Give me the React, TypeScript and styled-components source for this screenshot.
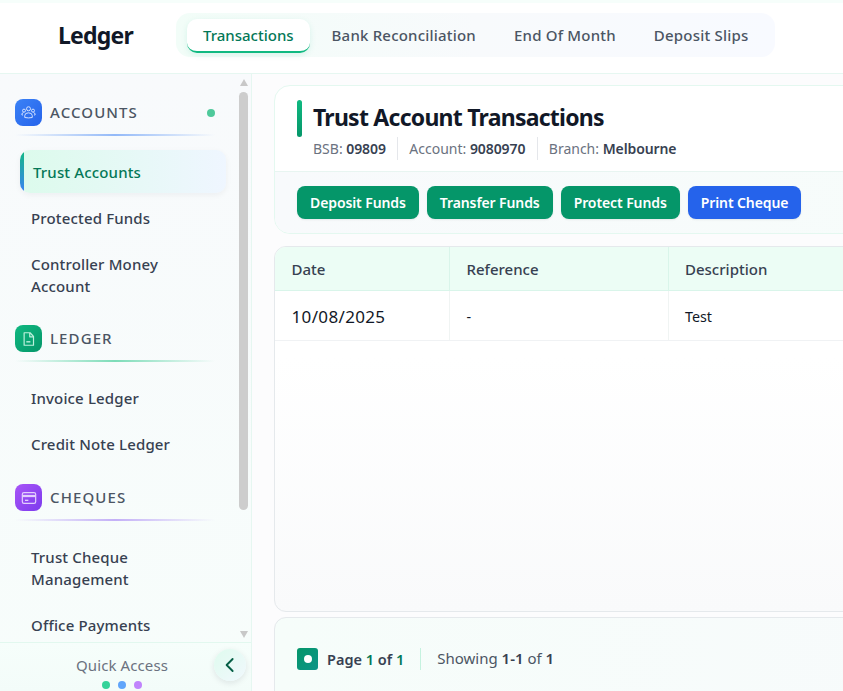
import React from "react";
import styled, { createGlobalStyle } from "styled-components";

const GlobalStyle = createGlobalStyle`
  html, body {
    margin: 0;
    height: 100%;
    overflow: hidden;
    background: #ffffff;
  }
  * { box-sizing: border-box; }
  body { font-family: "Noto Sans", "Open Sans", sans-serif; color: #111827; }
`;

const Shell = styled.div`
  width: 843px;
  height: 691px;
  display: flex;
  flex-direction: column;
  overflow: hidden;
  border-top: 3px solid;
  border-image: linear-gradient(180deg, #f6fefb 66%, #d9fbeb 66%) 1;
`;

const Header = styled.header`
  height: 71px;
  flex: none;
  display: flex;
  align-items: center;
  background: #ffffff;
  border-bottom: 1px solid #e6f7f1;
  padding-bottom: 6px;
`;

const Brand = styled.div`
  width: 176px;
  flex: none;
  padding-left: 58px;
  font-size: 23px;
  font-weight: 700;
  letter-spacing: -0.8px;
  color: #111827;
`;

const Tabs = styled.nav`
  display: flex;
  gap: 6px;
  padding: 6px 11px;
  height: 44px;
  border-radius: 14px;
  background: linear-gradient(90deg, #f2fdf8 0%, #f8fafc 50%, #f8faff 100%);
`;

const Tab = styled.div<{ $active?: boolean }>`
  display: flex;
  align-items: center;
  padding: 0 16px;
  height: ${(p) => (p.$active ? "34px" : "32px")};
  border-radius: 10px;
  font-size: 15px;
  font-weight: 500;
  letter-spacing: ${(p) => (p.$active ? "0" : "0.2px")};
  color: ${(p) => (p.$active ? "#047857" : "#4b5563")};
  background: ${(p) => (p.$active ? "#ffffff" : "transparent")};
  border-bottom: ${(p) => (p.$active ? "2px solid #10b981" : "none")};
  box-shadow: ${(p) => (p.$active ? "0 2px 6px rgba(16, 185, 129, 0.12)" : "none")};
`;

const Body = styled.div`
  flex: 1;
  min-height: 0;
  display: flex;
`;

const Sidebar = styled.aside`
  position: relative;
  width: 252px;
  flex: none;
  display: flex;
  flex-direction: column;
  background: linear-gradient(180deg, #f8fafc 0%, #f7fdfb 100%);
  border-right: 1px solid #e6f7f1;
`;

const SidebarScroll = styled.div`
  flex: 1;
  min-height: 0;
  display: flex;
  padding-right: 3px;
`;

const NavList = styled.div`
  flex: 1;
  min-width: 0;
  overflow: hidden;
  padding: 25px 13px 0 15px;
`;

const Rail = styled.div`
  width: 9px;
  flex: none;
  display: flex;
  flex-direction: column;
  align-items: center;
  padding-top: 5px;
`;

const RailArrow = styled.div<{ $down?: boolean }>`
  width: 0;
  height: 0;
  flex: none;
  border-left: 4.5px solid transparent;
  border-right: 4.5px solid transparent;
  ${(p) =>
    p.$down ? "border-top: 7px solid #c8c8c8;" : "border-bottom: 7px solid #c8c8c8;"}
`;

const RailTrack = styled.div`
  flex: 1;
  width: 100%;
  padding: 6px 0 121px;
  display: flex;
`;

const RailThumb = styled.div`
  width: 100%;
  border-radius: 5px;
  background: #cdcdcd;
`;

const RailEnd = styled.div`
  height: 4px;
  flex: none;
`;

const Section = styled.section<{ $gap?: number }>`
  margin-bottom: ${(p) => p.$gap ?? 18}px;
`;

const SectionHead = styled.div<{ $line: string }>`
  position: relative;
  display: flex;
  align-items: center;
  gap: 8px;
  height: 27px;
  margin-right: 11px;
  margin-bottom: 24px;

  &::after {
    content: "";
    position: absolute;
    left: 0;
    right: 0;
    bottom: -10px;
    height: 2px;
    background: linear-gradient(90deg, transparent, ${(p) => p.$line}, transparent);
  }
`;

const SectionIcon = styled.span<{ $from: string; $to: string }>`
  width: 27px;
  height: 27px;
  flex: none;
  display: flex;
  align-items: center;
  justify-content: center;
  border-radius: 8px;
  background: linear-gradient(135deg, ${(p) => p.$from}, ${(p) => p.$to});
`;

const SectionTitle = styled.span`
  flex: 1;
  font-size: 15px;
  font-weight: 500;
  letter-spacing: 1.1px;
  color: #4b5563;
  padding-bottom: 1px;
`;

const StatusDot = styled.span`
  width: 8px;
  height: 8px;
  border-radius: 50%;
  background: #4fc99b;
`;

const Items = styled.div`
  display: flex;
  flex-direction: column;
  gap: 3px;
`;

const Item = styled.div<{ $active?: boolean }>`
  padding: 10.5px 16px;
  font-size: 15px;
  line-height: 22px;
  font-weight: 500;
  letter-spacing: 0.15px;
  color: #374151;
  border-radius: 10px;

  ${(p) =>
    p.$active &&
    `
    margin-left: 5px;
    padding-left: 13px;
    color: #047857;
    background:
      linear-gradient(180deg, #10b981, #3b82f6) left / 4px 100% no-repeat,
      linear-gradient(90deg, #dcfbec 0%, #eff6ff 100%);
    box-shadow: 0 2px 6px rgba(15, 23, 42, 0.05);
  `}
`;

const QuickAccess = styled.div`
  height: 49px;
  flex: none;
  display: flex;
  flex-direction: column;
  align-items: center;
  padding-top: 12px;
  gap: 6px;
  border-top: 1px solid #e2f8ef;
  background: linear-gradient(180deg, #f6fefb, #f3fcf9);
`;

const QuickLabel = styled.div`
  font-size: 15px;
  line-height: 20px;
  letter-spacing: 0.1px;
  color: #6b7280;
  margin-left: -7px;
`;

const QuickDots = styled.div`
  display: flex;
  gap: 8px;
  margin-left: -7px;
`;

const QuickDot = styled.span<{ $color: string }>`
  width: 8px;
  height: 8px;
  border-radius: 50%;
  background: ${(p) => p.$color};
`;

const CollapseButton = styled.div`
  position: absolute;
  left: 214px;
  bottom: 10px;
  width: 32px;
  height: 32px;
  display: flex;
  align-items: center;
  justify-content: center;
  border-radius: 50%;
  color: #065f46;
  background: linear-gradient(135deg, #dffbee, #f1f8fd);
  box-shadow: 0 2px 6px rgba(15, 23, 42, 0.1);
`;

const Main = styled.main`
  flex: 1;
  min-width: 0;
  overflow: hidden;
  padding: 11px 0 0 22px;
  display: flex;
  flex-direction: column;
  gap: 6px;
  background: #fcfcfd;
`;

const AccountCard = styled.div`
  width: 900px;
  flex: none;
  margin-bottom: 6px;
  border: 1px solid #e4f8f0;
  border-radius: 16px;
  overflow: hidden;
  background: #ffffff;
`;

const AccountInfo = styled.div`
  height: 86px;
  padding: 14px 22px 0;
  border-bottom: 1px solid #e8f5f1;
`;

const TitleRow = styled.div`
  display: flex;
  align-items: center;
  gap: 11px;
  height: 37px;
`;

const TitleBar = styled.span`
  width: 5px;
  height: 37px;
  border-radius: 3px;
  background: linear-gradient(180deg, #10b981, #059669);
`;

const Title = styled.h1`
  margin: 0 0 4px;
  font-size: 23px;
  line-height: 32px;
  font-weight: 700;
  color: #111827;
  letter-spacing: -0.75px;
`;

const MetaRow = styled.div`
  display: flex;
  margin-left: 16px;
`;

const Meta = styled.div`
  font-size: 14px;
  line-height: 23px;
  color: #6b7280;
  padding-right: 11.5px;
  margin-right: 11px;
  border-right: 1px solid #e5e7eb;

  &:last-child {
    border-right: none;
  }

  b {
    font-weight: 600;
    letter-spacing: -0.1px;
    color: #374151;
  }
`;

const ActionBar = styled.div`
  height: 61px;
  display: flex;
  gap: 8px;
  padding: 14px 22px 0;
  background: linear-gradient(90deg, #f8fafc, #f6fdfa);
`;

const ActionButton = styled.div<{ $blue?: boolean }>`
  height: 33px;
  display: flex;
  align-items: center;
  padding: 0 13px;
  border-radius: 8px;
  font-size: 14px;
  font-weight: 600;
  letter-spacing: -0.1px;
  color: #ffffff;
  background: ${(p) => (p.$blue ? "#2563eb" : "#059669")};
  box-shadow: 0 1px 2px rgba(15, 23, 42, 0.08);
`;

const TablePanel = styled.div`
  width: 900px;
  height: 366px;
  flex: none;
  margin-bottom: -1px;
  border: 1px solid #e5e9ec;
  border-radius: 12px;
  overflow: hidden;
  background: linear-gradient(180deg, #ffffff 30%, #f9fafb 100%);
`;

const Row = styled.div<{ $head?: boolean }>`
  display: grid;
  grid-template-columns: 175px 218.5px 1fr;
  height: ${(p) => (p.$head ? "44px" : "50px")};
  background: ${(p) => (p.$head ? "#ecfdf5" : "#ffffff")};
  border-bottom: 1px solid ${(p) => (p.$head ? "#d9f5ea" : "#f0f2f4")};
`;

const Cell = styled.div<{ $head?: boolean; $large?: boolean }>`
  display: flex;
  align-items: center;
  padding-left: 16.5px;
  padding-top: ${(p) => (p.$head ? "0" : "2px")};
  border-right: 1px solid ${(p) => (p.$head ? "#d9f5ea" : "#f0f4f3")};
  font-size: ${(p) => (p.$head ? "15px" : p.$large ? "17px" : "14.3px")};
  letter-spacing: ${(p) => (p.$large ? "0.35px" : "0")};
  font-weight: ${(p) => (p.$head ? 500 : 400)};
  color: ${(p) => (p.$head ? "#374151" : "#111827")};
`;

const Pager = styled.div`
  width: 900px;
  height: 100px;
  flex: none;
  display: flex;
  align-items: flex-start;
  padding: 30px 22px 0;
  border: 1px solid #e5e9ec;
  border-radius: 12px;
  background: linear-gradient(90deg, #f6fdfa, #f8fafc);
`;

const PagerIcon = styled.span`
  width: 21px;
  height: 22px;
  display: flex;
  align-items: center;
  justify-content: center;
  border-radius: 3px;
  background: linear-gradient(135deg, #059669, #0d9488);

  &::after {
    content: "";
    width: 8px;
    height: 8px;
    border-radius: 50%;
    background: #ffffff;
  }
`;

const PageLabel = styled.span`
  margin-left: 9px;
  padding-right: 16px;
  height: 22px;
  font-size: 14.5px;
  line-height: 22px;
  font-weight: 600;
  color: #374151;
  border-right: 1px solid #c5f2df;

  em {
    font-style: normal;
    color: #047857;
  }
`;

const Showing = styled.span`
  margin-left: 16px;
  margin-top: -1px;
  font-size: 15px;
  line-height: 22px;
  color: #4b5563;

  b {
    font-weight: 600;
    color: #374151;
  }
`;

const AccountsIcon = () => (
  <svg width="15" height="15" viewBox="0 0 24 24" fill="none" stroke="#d3e1ff" strokeWidth="1.6">
    <circle cx="12" cy="6" r="3.2" />
    <circle cx="4.8" cy="9" r="2.4" />
    <circle cx="19.2" cy="9" r="2.4" />
    <path d="M6 20v-3a6 4.5 0 0 1 12 0v3a10 3 0 0 1-12 0z" />
    <path d="M3 16H1.5v-1.5A3 3 0 0 1 4 12M21 16h1.5v-1.5A3 3 0 0 0 20 12" />
  </svg>
);

const LedgerIcon = () => (
  <svg width="15" height="16" viewBox="0 0 24 24" fill="none" stroke="#bdf0dc" strokeWidth="1.9" strokeLinejoin="round">
    <path d="M5 2h9.5L20 8v14H5z" />
    <path d="M14 2.5v6h5.5" />
    <path d="M8.5 16.5h6.5" strokeWidth="2.2" />
  </svg>
);

const ChequeIcon = () => (
  <svg width="16" height="16" viewBox="0 0 24 24" fill="none" stroke="#e3cffd" strokeWidth="1.8" strokeLinejoin="round">
    <rect x="2" y="4" width="20" height="16" rx="2.5" />
    <path d="M2 9h20" strokeWidth="3.4" />
    <path d="M6 15.5h5" strokeWidth="2" />
  </svg>
);

const ChevronLeft = () => (
  <svg width="18" height="18" viewBox="0 0 24 24" fill="none" stroke="currentColor" strokeWidth="2.5" strokeLinecap="round" strokeLinejoin="round">
    <path d="M15.5 4l-8 8 8 8" />
  </svg>
);

export default function App() {
  return (
    <>
      <GlobalStyle />
      <Shell>
        <Header>
          <Brand>Ledger</Brand>
          <Tabs>
            <Tab $active>Transactions</Tab>
            <Tab>Bank Reconciliation</Tab>
            <Tab>End Of Month</Tab>
            <Tab>Deposit Slips</Tab>
          </Tabs>
        </Header>
        <Body>
          <Sidebar>
            <SidebarScroll>
              <NavList>
                <Section>
                  <SectionHead $line="#93b9f8">
                    <SectionIcon $from="#3b82f6" $to="#2563eb"><AccountsIcon /></SectionIcon>
                    <SectionTitle>ACCOUNTS</SectionTitle>
                    <StatusDot />
                  </SectionHead>
                  <Items>
                    <Item $active>Trust Accounts</Item>
                    <Item>Protected Funds</Item>
                    <Item>Controller Money Account</Item>
                  </Items>
                </Section>
                <Section $gap={19}>
                  <SectionHead $line="#7ddcb8">
                    <SectionIcon $from="#10b981" $to="#059669"><LedgerIcon /></SectionIcon>
                    <SectionTitle>LEDGER</SectionTitle>
                  </SectionHead>
                  <Items>
                    <Item>Invoice Ledger</Item>
                    <Item>Credit Note Ledger</Item>
                  </Items>
                </Section>
                <Section>
                  <SectionHead $line="#c4b0f7">
                    <SectionIcon $from="#a855f7" $to="#7c3aed"><ChequeIcon /></SectionIcon>
                    <SectionTitle>CHEQUES</SectionTitle>
                  </SectionHead>
                  <Items>
                    <Item>Trust Cheque Management</Item>
                    <Item>Office Payments</Item>
                  </Items>
                </Section>
              </NavList>
              <Rail>
                <RailArrow />
                <RailTrack><RailThumb /></RailTrack>
                <RailArrow $down />
                <RailEnd />
              </Rail>
            </SidebarScroll>
            <QuickAccess>
              <QuickLabel>Quick Access</QuickLabel>
              <QuickDots>
                <QuickDot $color="#34d399" />
                <QuickDot $color="#60a5fa" />
                <QuickDot $color="#c084fc" />
              </QuickDots>
            </QuickAccess>
            <CollapseButton><ChevronLeft /></CollapseButton>
          </Sidebar>
          <Main>
            <AccountCard>
              <AccountInfo>
                <TitleRow>
                  <TitleBar />
                  <Title>Trust Account Transactions</Title>
                </TitleRow>
                <MetaRow>
                  <Meta>BSB: <b>09809</b></Meta>
                  <Meta>Account: <b>9080970</b></Meta>
                  <Meta>Branch: <b>Melbourne</b></Meta>
                </MetaRow>
              </AccountInfo>
              <ActionBar>
                <ActionButton>Deposit Funds</ActionButton>
                <ActionButton>Transfer Funds</ActionButton>
                <ActionButton>Protect Funds</ActionButton>
                <ActionButton $blue>Print Cheque</ActionButton>
              </ActionBar>
            </AccountCard>
            <TablePanel>
              <Row $head>
                <Cell $head>Date</Cell>
                <Cell $head>Reference</Cell>
                <Cell $head>Description</Cell>
              </Row>
              <Row>
                <Cell $large>10/08/2025</Cell>
                <Cell>-</Cell>
                <Cell>Test</Cell>
              </Row>
            </TablePanel>
            <Pager>
              <PagerIcon />
              <PageLabel>Page <em>1</em> of <em>1</em></PageLabel>
              <Showing>Showing <b>1-1</b> of <b>1</b></Showing>
            </Pager>
          </Main>
        </Body>
      </Shell>
    </>
  );
}
